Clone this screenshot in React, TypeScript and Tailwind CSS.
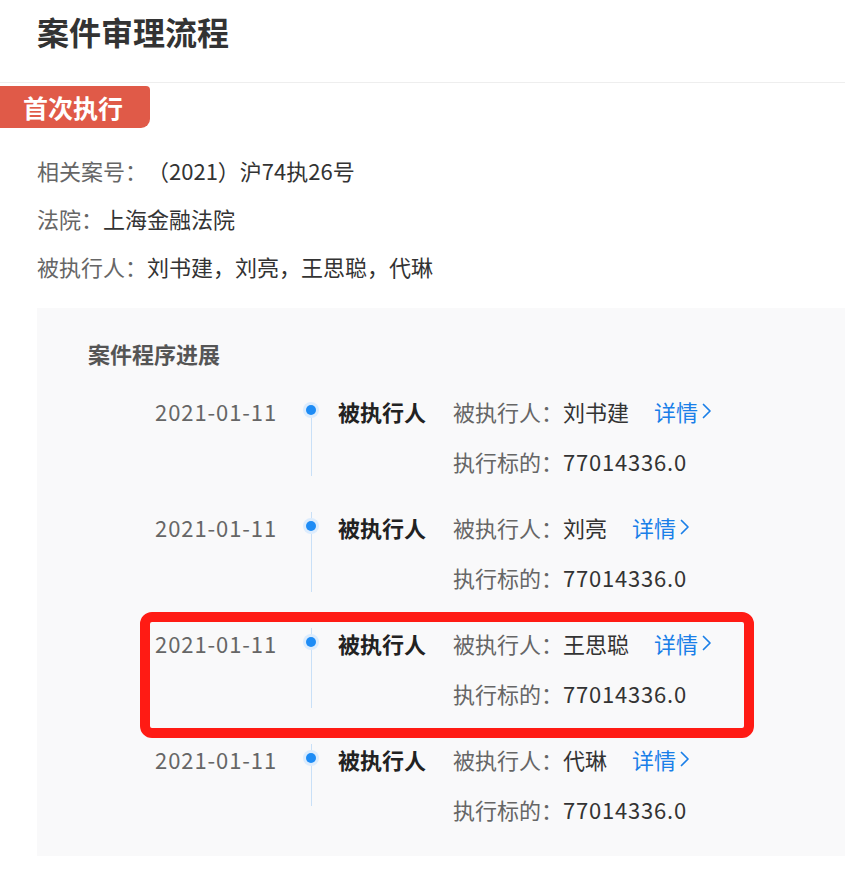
type Step = {
   date: string;
   title: string;
   party: string;
   amount: string;
};

const steps: Step[] = [
   { date: "2021-01-11", title: "被执行人", party: "刘书建", amount: "77014336.0" },
   { date: "2021-01-11", title: "被执行人", party: "刘亮", amount: "77014336.0" },
   { date: "2021-01-11", title: "被执行人", party: "王思聪", amount: "77014336.0" },
   { date: "2021-01-11", title: "被执行人", party: "代琳", amount: "77014336.0" },
];

const FONT = "font-['Noto_Sans_CJK_SC','Microsoft_YaHei',sans-serif] [text-spacing-trim:space-all]";

const Chevron = () => (
   <svg width="10" height="16" viewBox="0 0 10 16" fill="none" className="ml-[4px]">
      <polyline points="1.5,1.5 8,8 1.5,14.5" stroke="currentColor" strokeWidth="1.7" strokeLinecap="round" strokeLinejoin="round" />
   </svg>
);

const TimelineItem = ({
   step,
   index,
   total,
}: {
   step: Step;
   index: number;
   total: number;
}) => {
   const isFirst = index === 0;
   const isLast = index === total - 1;
   const highlighted = index === 2;

   return (
      <div className={`relative flex ${isLast ? "" : "pb-[36px]"}`}>
         {/* annotation frame round the third entry */}
         {highlighted && (
            <div className="absolute left-[103px] top-[-16px] w-[614px] h-[126px] border-[10px] border-[#ff1b14] rounded-[12px] pointer-events-none" />
         )}
         <div className="w-[240px] shrink-0 text-right text-[22px] leading-[30px] tracking-[0.9px] text-[#666]">
            {step.date}
         </div>
         <div className="relative w-[61px] shrink-0">
            <div
               className={`absolute left-[33.5px] w-px bg-[#c9e0f7] ${
                  isFirst ? "top-[15px]" : "top-0"
               } ${isLast ? "h-[62px]" : "bottom-0"}`}
            />
            <div className="absolute left-[26px] top-[6px] w-[16px] h-[16px] rounded-full bg-[#dcecfd] flex items-center justify-center">
               <div className="w-[10px] h-[10px] rounded-full bg-[#1e8cf5]" />
            </div>
         </div>
         <div className="w-[115px] shrink-0 text-[22px] leading-[30px] font-bold text-[#222]">
            {step.title}
         </div>
         <div className="flex flex-col gap-[20px] text-[22px] leading-[30px]">
            <div className="flex items-center">
               <span className="text-[#666]">被执行人：</span>
               <span className="text-[#333]">{step.party}</span>
               <span className="ml-[25px] flex items-center text-[#1a7fe8]">
                  详情
                  <Chevron />
               </span>
            </div>
            <div className="flex items-center">
               <span className="text-[#666]">执行标的：</span>
               <span className="text-[#333] tracking-[0.8px]">{step.amount}</span>
            </div>
         </div>
      </div>
   );
};

const App = () => {
   return (
      <main className={`w-[845px] h-[891px] bg-white overflow-hidden ${FONT}`}>
         <header className="h-[83px] border-b border-[#eeeeee] pl-[37px] pt-[9px]">
            <h1 className="text-[32px] leading-[44px] font-bold text-[#333]">案件审理流程</h1>
         </header>

         <div className="mt-[3px] w-[150px] h-[42px] bg-[#e05a48] rounded-tr-[4px] rounded-br-[9px] pl-[23px] flex items-center">
            <span className="text-[25px] font-bold text-white leading-none">首次执行</span>
         </div>

         <section className="pl-[37px] pt-[27px] flex flex-col gap-[18px] text-[22px] leading-[30px]">
            <p>
               <span className="text-[#666]">相关案号：</span>
               <span className="text-[#333]">（2021）沪74执26号</span>
            </p>
            <p>
               <span className="text-[#666]">法院：</span>
               <span className="text-[#333]">上海金融法院</span>
            </p>
            <p>
               <span className="text-[#666]">被执行人：</span>
               <span className="text-[#333]">刘书建，刘亮，王思聪，代琳</span>
            </p>
         </section>

         <section className="ml-[37px] mt-[27px] bg-[#f9f9fa] pt-[30px] pb-[32px]">
            <h2 className="pl-[51px] text-[22px] leading-[30px] font-bold text-[#555]">案件程序进展</h2>
            <div className="mt-[28px]">
               {steps.map((step, i) => (
                  <TimelineItem key={i} step={step} index={i} total={steps.length} />
               ))}
            </div>
         </section>
      </main>
   );
};

export default App;
